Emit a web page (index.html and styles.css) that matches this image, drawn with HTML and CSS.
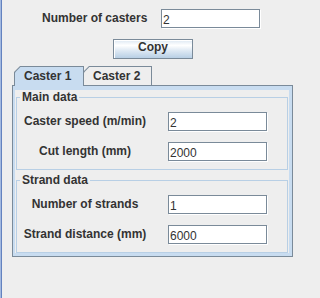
FILE: index.html
```html
<!DOCTYPE html>
<html lang="en">
<head>
    <meta charset="UTF-8">
    <meta name="viewport" content="width=device-width, initial-scale=1.0">
    <title>Casters</title>
    <link rel="stylesheet" href="styles.css">
</head>
<body>
    <div class="frame">
        <div class="top-row">
            <span class="top-label">Number of casters</span>
            <div class="field top-field">2</div>
        </div>
        <button class="copy-btn">Copy</button>

        <div class="tabpane">
            <div class="tab-strip">
                <div class="tab selected"><span>Caster 1</span></div>
                <div class="tab"><span>Caster 2</span></div>
            </div>
            <div class="tab-body">
                <div class="tab-inner">
                    <fieldset class="group">
                        <legend>Main data</legend>
                        <div class="form-grid">
                            <span class="lbl">Caster speed (m/min)</span>
                            <div class="field">2</div>
                            <span class="lbl">Cut length (mm)</span>
                            <div class="field">2000</div>
                        </div>
                    </fieldset>
                    <fieldset class="group">
                        <legend>Strand data</legend>
                        <div class="form-grid">
                            <span class="lbl">Number of strands</span>
                            <div class="field">1</div>
                            <span class="lbl">Strand distance (mm)</span>
                            <div class="field">6000</div>
                        </div>
                    </fieldset>
                </div>
            </div>
        </div>
    </div>
</body>
</html>
```
FILE: styles.css
```css
* {
    box-sizing: border-box;
}
body {
    margin: 0;
    background: #eeeeee;
    color: #333333;
    font-family: "Liberation Sans", Arial, sans-serif;
    font-size: 12px;
}
.frame {
    height: 298px;
    border-left: 1px solid #a3b9e0;
    padding-left: 1px;
    box-shadow: inset 1px 0 #6382bf;
}
.top-row {
    display: flex;
    align-items: flex-start;
    padding: 9px 0 0 40px;
}
.top-label {
    width: 106px;
    margin-top: 2px;
    margin-right: 13px;
    font-weight: bold;
    line-height: 14px;
}
.field {
    width: 99px;
    height: 19px;
    margin: 0 1px 1px 0;
    padding: 3px 0 0 1px;
    border: 1px solid #7a8a99;
    background: #fff;
    box-shadow: 1px 1px 0 #fff;
    line-height: 14px;
}
.copy-btn {
    display: block;
    width: 80px;
    height: 20px;
    margin: 10px 0 0 111px;
    padding: 0 0 4px;
    border: 1px solid #7a8a99;
    background: linear-gradient(#dde8f3 0%, #ffffff 30%, #dde8f3 60%, #b8cfe5 100%);
    box-shadow: inset 1px 1px #fff;
    color: #333333;
    font-family: inherit;
    font-size: 12px;
    font-weight: bold;
    line-height: 14px;
}
.tabpane {
    width: 281px;
    margin: 7px 0 0 10px;
}
.tab-strip {
    display: flex;
    align-items: flex-start;
    height: 19px;
    padding-left: 2px;
}
.tab {
    width: 69px;
    height: 19px;
    padding: 1px 1px 0;
    background: #7a8a99;
    clip-path: polygon(0 6px, 6px 0, 100% 0, 100% 100%, 0 100%);
}
.tab span {
    display: block;
    height: 100%;
    padding: 2px 0 0 9px;
    background: #eeeeee;
    clip-path: polygon(0 5.4px, 5.4px 0, 100% 0, 100% 100%, 0 100%);
    font-weight: bold;
    line-height: 14px;
}
.tab.selected {
    position: relative;
    z-index: 1;
    width: 70px;
    height: 20px;
}
.tab.selected span {
    background: #c8dcf0;
}
.tab + .tab {
    margin-left: -1px;
}
.tab-body {
    border: 1px solid #7a8a99;
    background: #eeeeee;
}
.tab-inner {
    border-style: solid;
    border-color: #c8dcf0;
    border-width: 4px 3px 3px 2px;
    padding: 0 1px;
}
.group {
    min-width: 0;
    margin: 0;
    padding: 8px 0 7px;
    border: 1px solid #b8cfe5;
}
.group + .group {
    margin-top: 3px;
}
.group legend {
    margin-left: 3px;
    padding: 0 2px;
    font-weight: bold;
    line-height: 14px;
}
.form-grid {
    display: grid;
    grid-template-columns: 136px 100px;
    column-gap: 15px;
    row-gap: 10px;
}
.lbl {
    justify-self: center;
    margin-top: 2px;
    font-weight: bold;
    line-height: 14px;
}
```
